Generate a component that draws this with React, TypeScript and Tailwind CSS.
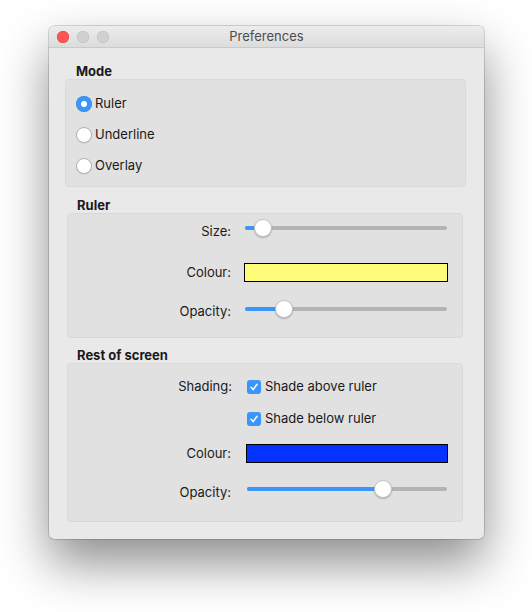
import React from "react";

function Radio({ checked, label }: { checked?: boolean; label: string }) {
  return (
    <div className="flex h-[20px] items-center">
      {checked ? (
        <div className="flex h-[16px] w-[16px] items-center justify-center rounded-full bg-[#3a97f9] shadow-[inset_0_0_0_0.5px_rgba(0,0,0,0.15)]">
          <div className="h-[6px] w-[6px] rounded-full bg-white" />
        </div>
      ) : (
        <div className="h-[16px] w-[16px] rounded-full border border-[#b3b3b3] bg-white shadow-[0_0.5px_1px_rgba(0,0,0,0.1)]" />
      )}
      <span className="ml-[3px] text-[13px] text-[#1a1a1a]">{label}</span>
    </div>
  );
}

function Slider({ left, width, knob }: { left: number; width: number; knob: number }) {
  return (
    <div className="relative h-[20px]" style={{ marginLeft: left, width }}>
      <div className="absolute left-0 right-0 top-[8px] h-[4px] rounded-full bg-[#b4b4b4]" />
      <div className="absolute left-0 top-[8px] h-[4px] rounded-full bg-[#3a97f9]" style={{ width: knob }} />
      <div
        className="absolute top-[1px] h-[18px] w-[18px] rounded-full border border-[#c4c4c4] bg-white shadow-[0_1px_1.5px_rgba(0,0,0,0.25)]"
        style={{ left: knob - 9 }}
      />
    </div>
  );
}

function Check({ label }: { label: string }) {
  return (
    <div className="flex h-[20px] items-center">
      <div className="flex h-[14px] w-[14px] items-center justify-center rounded-[3px] bg-[#3a97f9]">
        <svg width="10" height="10" viewBox="0 0 10 10">
          <path d="M2 5.3 L4.1 7.6 L8 2.3" fill="none" stroke="white" strokeWidth="1.5" strokeLinecap="round" strokeLinejoin="round" />
        </svg>
      </div>
      <span className="ml-[4px] text-[13px] text-[#1a1a1a]">{label}</span>
    </div>
  );
}

function Label({ text, w, dy = 0 }: { text: string; w: number; dy?: number }) {
  return (
    <div className="shrink-0 text-right text-[13px] text-[#1a1a1a]" style={{ width: w, marginTop: dy * 2 }}>
      {text}
    </div>
  );
}

export default function App() {
  return (
    <div
      className="h-[612px] w-[532px] overflow-hidden bg-white pl-[49px] pt-[26px]"
      style={{ fontFamily: "Inter, 'Noto Sans', 'Liberation Sans', sans-serif" }}
    >
      <div className="flex h-[513px] w-[435px] flex-col rounded-[5px] bg-[#e9e9e9] shadow-[0_24px_50px_rgba(0,0,0,0.45),0_0_0_0.5px_rgba(0,0,0,0.3)]">
        {/* title bar */}
        <div className="relative flex h-[22px] shrink-0 items-center justify-center rounded-t-[5px] border-b border-[#c9c9c9] bg-gradient-to-b from-[#ececec] to-[#dcdcdc]">
          <div className="absolute left-[8px] top-[5px] flex gap-[8px]">
            <div className="h-[12px] w-[12px] rounded-full bg-[#fc5753] shadow-[inset_0_0_0_0.5px_#df3d38]" />
            <div className="h-[12px] w-[12px] rounded-full bg-[#d0d0d0] shadow-[inset_0_0_0_0.5px_#bcbcbc]" />
            <div className="h-[12px] w-[12px] rounded-full bg-[#d0d0d0] shadow-[inset_0_0_0_0.5px_#bcbcbc]" />
          </div>
          <span className="text-[13px] text-[#4d4d4d]">Preferences</span>
        </div>

        {/* Mode */}
        <div className="ml-[27px] mt-[15px] h-[16px] text-[13px] font-bold leading-[16px] text-[#1a1a1a]">Mode</div>
        <div className="ml-[16px] mr-[18px] h-[108px] rounded-[4px] border border-[#d9d9d9] bg-[#e1e1e1] pl-[10px] pt-[14px]">
          <div className="flex flex-col gap-[11px]">
            <Radio checked label="Ruler" />
            <Radio label="Underline" />
            <Radio label="Overlay" />
          </div>
        </div>

        {/* Ruler */}
        <div className="ml-[28px] mt-[10px] h-[16px] text-[13px] font-bold leading-[16px] text-[#1a1a1a]">Ruler</div>
        <div className="ml-[18px] mr-[21px] h-[125px] rounded-[4px] border border-[#d9d9d9] bg-[#e1e1e1] pt-[4px]">
          <div className="flex h-[20px] items-center">
            <Label text="Size:" w={163} dy={4} />
            <Slider left={14} width={202} knob={18} />
          </div>
          <div className="mt-[24px] flex h-[20px] items-center">
            <Label text="Colour:" w={163} dy={1} />
            <div className="ml-[13px] h-[19px] w-[204px] border border-black bg-[#fffc79]" />
          </div>
          <div className="mt-[17px] flex h-[20px] items-center">
            <Label text="Opacity:" w={163} dy={3} />
            <Slider left={14} width={202} knob={39} />
          </div>
        </div>

        {/* Rest of screen */}
        <div className="ml-[28px] mt-[9px] h-[16px] text-[13px] font-bold leading-[16px] text-[#1a1a1a]">Rest of screen</div>
        <div className="ml-[18px] mr-[21px] h-[159px] rounded-[4px] border border-[#d9d9d9] bg-[#e1e1e1] pt-[13px]">
          <div className="flex h-[20px] items-center">
            <Label text="Shading:" w={164} />
            <div className="ml-[15px]">
              <Check label="Shade above ruler" />
            </div>
          </div>
          <div className="mt-[12px] flex h-[20px] items-center">
            <div className="w-[164px] shrink-0" />
            <div className="ml-[15px]">
              <Check label="Shade below ruler" />
            </div>
          </div>
          <div className="mt-[14px] flex h-[20px] items-center">
            <Label text="Colour:" w={163} dy={1} />
            <div className="ml-[15px] h-[19px] w-[202px] border border-black bg-[#0433ff]" />
          </div>
          <div className="mt-[16px] flex h-[20px] items-center">
            <Label text="Opacity:" w={163} dy={4} />
            <Slider left={16} width={200} knob={136} />
          </div>
        </div>
      </div>
    </div>
  );
}
